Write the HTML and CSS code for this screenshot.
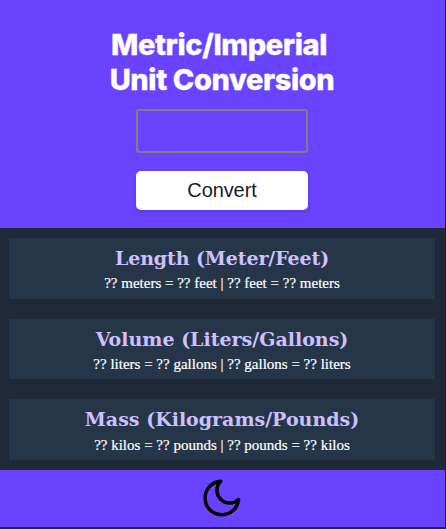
FILE: index.html
```
<!DOCTYPE html>
<html lang="en">
<head>
<meta charset="utf-8">
<title>Unit Conversion</title>
<link rel="stylesheet" href="styles.css">
</head>
<body>
<div class="app">
  <header class="converter">
    <h1>Metric/Imperial&nbsp;<br>Unit Conversion</h1>
    <input class="amount" type="text" aria-label="Value">
    <button class="convert" type="button">Convert</button>
  </header>
  <main class="results">
    <section class="card length">
      <h2>Length (Meter/Feet)</h2>
      <p>?? meters = ?? feet | ?? feet = ?? meters</p>
    </section>
    <section class="card volume">
      <h2>Volume (Liters/Gallons)</h2>
      <p>?? liters = ?? gallons | ?? gallons = ?? liters</p>
    </section>
    <section class="card mass">
      <h2>Mass (Kilograms/Pounds)</h2>
      <p>?? kilos = ?? pounds | ?? pounds = ?? kilos</p>
    </section>
  </main>
  <footer class="theme">
    <svg class="moon" viewBox="0 0 38 38" aria-hidden="true"><path d="M17.6 2.2A16.8 16.8 0 1 0 35.6 20.4A12.8 12.8 0 0 1 17.6 2.2Z"/></svg>
  </footer>
</div>
</body>
</html>
```
FILE: styles.css
```
* {
  box-sizing: border-box;
  margin: 0;
}
body {
  background: #1f2937;
  overflow: hidden;
}
.app {
  height: 529px;
  border-right: 1px solid #171b2b;
}
.converter {
  height: 228px;
  padding: 27px 1px 0 0;
  background: #6943ff;
  display: flex;
  flex-direction: column;
  align-items: center;
}
h1 {
  color: #fff;
  font: 800 29px/35px Inter, sans-serif;
  letter-spacing: -0.4px;
  text-align: center;
  -webkit-text-stroke: 0.3px #fff;
}
.amount {
  width: 172px;
  height: 44px;
  margin-top: 12px;
  border: 2px solid #808080;
  border-radius: 3px;
  background: transparent;
  color: #fff;
  text-align: center;
  outline: 0;
}
.convert {
  width: 172px;
  height: 39px;
  margin-top: 18px;
  padding: 0;
  border: 0;
  border-radius: 5px;
  background: #fff;
  color: #1b1b1f;
  font: 20px/39px "Liberation Sans", Arial, sans-serif;
  letter-spacing: -0.1px;
  box-shadow: 0 2px 4px rgba(0, 0, 0, 0.15);
}
.results {
  height: 242px;
  padding: 10px 10px 10px 9px;
  display: flex;
  flex-direction: column;
  gap: 20px;
  background: #1f2937;
}
.card {
  height: 61px;
  padding-top: 8px;
  background: #273549;
  text-align: center;
  white-space: nowrap;
  font-family: Georgia, "Liberation Serif", serif;
}
.volume {
  height: 60px;
}
.card h2 {
  color: #ccc1ff;
  font-family: Georgia, "DejaVu Serif", serif;
  font-size: 19px;
  line-height: 25px;
}
.length h2 {
  letter-spacing: -0.1px;
}
.card p {
  margin-top: 2px;
  color: #fff;
  font-size: 15px;
  line-height: 20px;
  -webkit-text-stroke: 0.2px #fff;
}
.mass p {
  margin-top: 3px;
}
.theme {
  height: 57px;
  padding-right: 2px;
  display: flex;
  align-items: center;
  justify-content: center;
  background: #6943ff;
}
.moon {
  width: 38px;
  height: 38px;
  margin-top: -2px;
  fill: none;
  stroke: #000;
  stroke-width: 3.5;
  stroke-linejoin: round;
}
```
